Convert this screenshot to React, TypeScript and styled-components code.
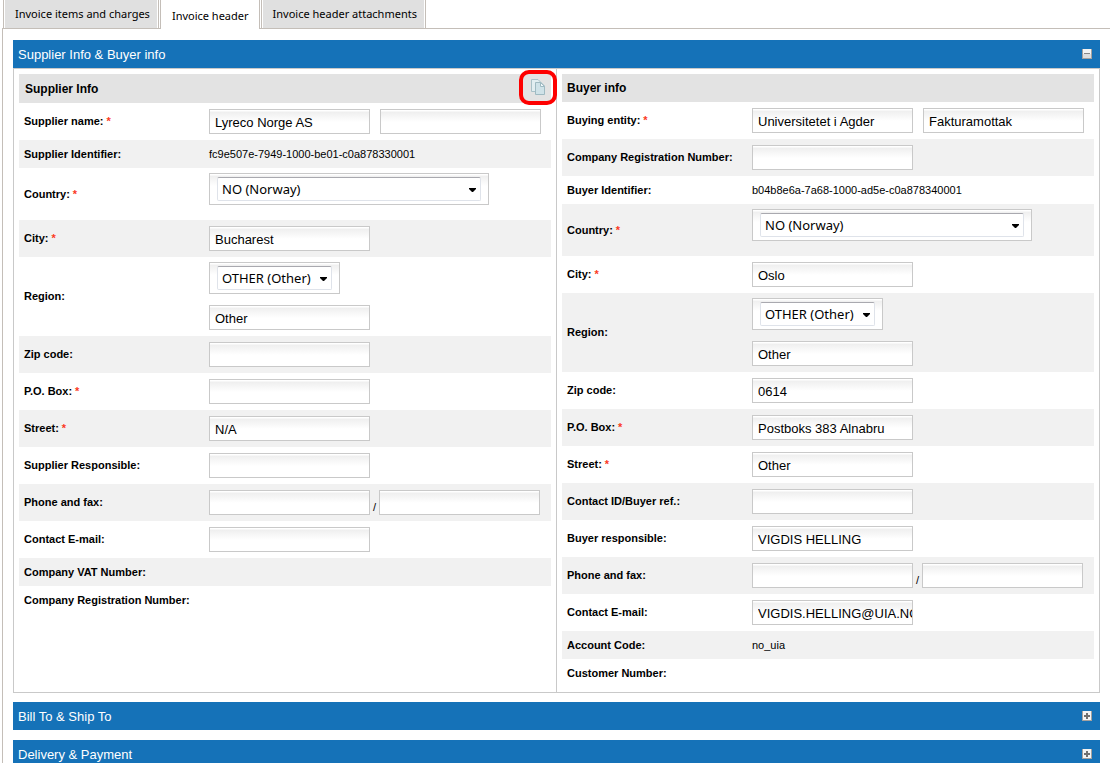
import React, { useId } from "react";
import styled, { createGlobalStyle } from "styled-components";

const GlobalStyle = createGlobalStyle`
  * { box-sizing: border-box; }
  body {
    margin: 0;
    background: #fff;
    color: #000;
    font-family: "Liberation Sans", Arial, sans-serif;
    font-size: 11px;
    overflow-x: hidden;
    scrollbar-width: none;
  }
`;

const line = "#c4beb8";

const Page = styled.div`
  padding-left: 2px;
`;

const TabBar = styled.nav`
  display: flex;
  gap: 1px;
  height: 29px;
  padding-left: 1px;
  box-shadow: inset 0 -1px ${line};
`;

const Tab = styled.button<{ $active?: boolean }>`
  height: ${(p) => (p.$active ? 29 : 28)}px;
  margin: 0;
  padding: ${(p) => (p.$active ? "2px 10px 0 11px" : "0 8px 0 11px")};
  border: solid ${line};
  border-width: 0 1px;
  background: ${(p) => (p.$active ? "#fff" : "#e0e0e0")};
  box-shadow: ${(p) => (p.$active ? "none" : "inset 1px 0 #fff, inset -1px 0 #fff")};
  font-family: "Noto Sans", sans-serif;
  font-size: 11px;
  line-height: 26px;
  color: #000;
  white-space: nowrap;
`;

const Content = styled.main`
  padding: 11px 10px 0;
  border-left: 1px solid ${line};
`;

const Section = styled.section`
  margin-bottom: 9px;
`;

const Collapsed = styled.section`
  margin-bottom: 10px;
`;

const Bar = styled.h2`
  display: flex;
  align-items: center;
  justify-content: space-between;
  height: 28px;
  margin: 0;
  padding: 0 8px 0 5px;
  background: #1572b8;
  color: #fff;
  font-size: 13px;
  font-weight: 400;
`;

const Toggle = styled.button`
  width: 10px;
  height: 10px;
  padding: 0;
  border: 0;
  background: none;
  svg { display: block; }
`;

const Panes = styled.div`
  display: flex;
  min-height: 625px;
  border: 1px solid #c9c9c9;
`;

const Pane = styled.section`
  flex: 1;
  min-width: 0;
  padding: 5px;
  & + & {
    border-left: 1px solid #c9c9c9;
  }
`;

const PaneHeader = styled.h3<{ $tall?: boolean }>`
  display: flex;
  align-items: center;
  justify-content: space-between;
  height: ${(p) => (p.$tall ? 29 : 28)}px;
  margin: 0;
  padding: 0 0 0 ${(p) => (p.$tall ? 6 : 5)}px;
  background: #e3e3e3;
  font-size: 12px;
  font-weight: 700;
`;

const CopyButton = styled.button`
  position: relative;
  width: 32px;
  height: 29px;
  padding: 0;
  border: 0;
  background: none;
`;

const CopyIcon = styled.svg`
  position: absolute;
  left: 12px;
  top: 5px;
`;

const Marker = styled.span`
  position: absolute;
  left: 0;
  top: -4px;
  width: 38px;
  height: 35px;
  border: 4px solid #fe0000;
  border-radius: 10px;
`;

const Row = styled.div<{ $shade: boolean }>`
  display: grid;
  grid-template-columns: 190px 1fr;
  align-items: center;
  min-height: 28px;
  background: ${(p) => (p.$shade ? "#f1f1f1" : "#fff")};
`;

const Label = styled.label`
  padding: 0 0 1px 5px;
  font-weight: 700;
`;

const Star = styled.span`
  color: #fb3a1e;
  margin-left: 3px;
`;

const Fields = styled.div<{ $gap?: number }>`
  display: flex;
  gap: ${(p) => p.$gap ?? 0}px;
  padding: 6px 0;
`;

const Slash = styled.span`
  width: 9px;
  padding: 11px 0 0 3px;
`;

const TextInput = styled.input`
  width: 161px;
  height: 25px;
  padding: 2px 0 0 5px;
  border: 1px solid #c9c9c9;
  border-radius: 0;
  background: linear-gradient(#fff 1px, #efefef 2px, #fff 12px);
  font-family: "Liberation Sans", Arial, sans-serif;
  font-size: 13px;
  color: #000;
`;

const SelectStack = styled.div<{ $country?: boolean }>`
  display: flex;
  flex-direction: column;
  align-items: flex-start;
  gap: 11px;
  padding: 5px 0 ${(p) => (p.$country ? 15 : 6)}px;
`;

const SelectFrame = styled.div<{ $wide?: boolean }>`
  position: relative;
  width: ${(p) => (p.$wide ? 280 : 131)}px;
  height: 32px;
  padding: 3px 7px;
  border: 1px solid #c9c9c9;
  background: linear-gradient(#fff 1px, #efefef 2px, #fff 12px);
`;

const Select = styled.select`
  appearance: none;
  display: block;
  width: 100%;
  height: 24px;
  padding: 0 0 0 4px;
  border: 1px solid #dfe3ea;
  border-top-color: #a9a9af;
  border-radius: 2px;
  background: #fff;
  font-family: "Noto Sans", sans-serif;
  font-size: 13px;
  color: #000;
`;

const Arrow = styled.svg`
  position: absolute;
  right: 12px;
  top: 14px;
  pointer-events: none;
`;

function ToggleButton({ open }: { open?: boolean }) {
  return (
    <Toggle type="button" aria-label={open ? "Collapse" : "Expand"}>
      <svg width="10" height="10" viewBox="0 0 10 10" shapeRendering="crispEdges">
        <rect width="10" height="10" rx="1" fill="#a5a19e" />
        <rect x="1" y="0" width="8" height="9" fill="#f4f4f4" />
        {open ? (
          <>
            <rect x="1" y="5" width="8" height="4" fill="#dedede" />
            <rect x="2" y="4" width="6" height="1" fill="#888" />
          </>
        ) : (
          <path d="M2 4h2V2h2v2h2v2H6v2H4V6H2z" fill="#707070" />
        )}
      </svg>
    </Toggle>
  );
}

type Field = {
  label: string;
  required?: boolean;
  kind?: "input" | "pair" | "phone" | "text" | "country" | "region";
  values?: string[];
};

function SelectBox({ id, value, wide }: { id: string; value: string; wide?: boolean }) {
  return (
    <SelectFrame $wide={wide}>
      <Select id={id} defaultValue={value}>
        <option>{value}</option>
      </Select>
      <Arrow width="7" height="4" viewBox="0 0 7 4">
        <path d="M0 0h7v1L4 4H3L0 1z" />
      </Arrow>
    </SelectFrame>
  );
}

function FieldRow({ field, shade }: { field: Field; shade: boolean }) {
  const id = useId();
  const { label, required, kind = "input", values = [] } = field;
  return (
    <Row $shade={shade}>
      <Label as={kind === "text" ? "span" : "label"} htmlFor={kind === "text" ? undefined : id}>
        {label}
        {required && <Star>*</Star>}
      </Label>
      {kind === "text" && <span>{values[0]}</span>}
      {kind === "input" && (
        <Fields>
          <TextInput id={id} defaultValue={values[0]} />
        </Fields>
      )}
      {kind === "pair" && (
        <Fields $gap={10}>
          <TextInput id={id} defaultValue={values[0]} />
          <TextInput aria-label={label + " 2"} defaultValue={values[1]} />
        </Fields>
      )}
      {kind === "phone" && (
        <Fields>
          <TextInput id={id} />
          <Slash>/</Slash>
          <TextInput aria-label="Fax" />
        </Fields>
      )}
      {kind === "country" && (
        <SelectStack $country>
          <SelectBox id={id} value={values[0]} wide />
        </SelectStack>
      )}
      {kind === "region" && (
        <SelectStack>
          <SelectBox id={id} value={values[0]} />
          <TextInput aria-label="Region name" defaultValue={values[1]} />
        </SelectStack>
      )}
    </Row>
  );
}

const supplier: Field[] = [
  { label: "Supplier name:", required: true, kind: "pair", values: ["Lyreco Norge AS", ""] },
  { label: "Supplier Identifier:", kind: "text", values: ["fc9e507e-7949-1000-be01-c0a878330001"] },
  { label: "Country:", required: true, kind: "country", values: ["NO (Norway)"] },
  { label: "City:", required: true, values: ["Bucharest"] },
  { label: "Region:", kind: "region", values: ["OTHER (Other)", "Other"] },
  { label: "Zip code:" },
  { label: "P.O. Box:", required: true },
  { label: "Street:", required: true, values: ["N/A"] },
  { label: "Supplier Responsible:" },
  { label: "Phone and fax:", kind: "phone" },
  { label: "Contact E-mail:" },
  { label: "Company VAT Number:", kind: "text" },
  { label: "Company Registration Number:", kind: "text" },
];

const buyer: Field[] = [
  { label: "Buying entity:", required: true, kind: "pair", values: ["Universitetet i Agder", "Fakturamottak"] },
  { label: "Company Registration Number:" },
  { label: "Buyer Identifier:", kind: "text", values: ["b04b8e6a-7a68-1000-ad5e-c0a878340001"] },
  { label: "Country:", required: true, kind: "country", values: ["NO (Norway)"] },
  { label: "City:", required: true, values: ["Oslo"] },
  { label: "Region:", kind: "region", values: ["OTHER (Other)", "Other"] },
  { label: "Zip code:", values: ["0614"] },
  { label: "P.O. Box:", required: true, values: ["Postboks 383 Alnabru"] },
  { label: "Street:", required: true, values: ["Other"] },
  { label: "Contact ID/Buyer ref.:" },
  { label: "Buyer responsible:", values: ["VIGDIS HELLING"] },
  { label: "Phone and fax:", kind: "phone" },
  { label: "Contact E-mail:", values: ["VIGDIS.HELLING@UIA.NO"] },
  { label: "Account Code:", kind: "text", values: ["no_uia"] },
  { label: "Customer Number:", kind: "text" },
];

export default function App() {
  return (
    <Page>
      <GlobalStyle />
      <TabBar>
        <Tab type="button">Invoice items and charges</Tab>
        <Tab type="button" $active>Invoice header</Tab>
        <Tab type="button">Invoice header attachments</Tab>
      </TabBar>
      <Content>
        <Section>
          <Bar>
            Supplier Info &amp; Buyer info
            <ToggleButton open />
          </Bar>
          <Panes>
            <Pane>
              <PaneHeader $tall>
                Supplier Info
                <CopyButton type="button" aria-label="Copy supplier info">
                  <CopyIcon width="14" height="16" viewBox="0 0 14 16">
                    <path d="M.5.5H7L10 3.500v9H.5z" fill="#e2eef1" stroke="#a9c1c8" />
                    <path d="M4.500 3.500H10L13.500 7v8.500h-9z" fill="#cfe2e8" stroke="#9fbac2" />
                    <path d="M9.500 3.500v4h4z" fill="#f2f8fa" stroke="#9fbac2" />
                  </CopyIcon>
                  <Marker />
                </CopyButton>
              </PaneHeader>
              {supplier.map((f, i) => (
                <FieldRow key={f.label} field={f} shade={i % 2 === 1} />
              ))}
            </Pane>
            <Pane>
              <PaneHeader>Buyer info</PaneHeader>
              {buyer.map((f, i) => (
                <FieldRow key={f.label} field={f} shade={i % 2 === 1} />
              ))}
            </Pane>
          </Panes>
        </Section>
        <Collapsed>
          <Bar>
            Bill To &amp; Ship To
            <ToggleButton />
          </Bar>
        </Collapsed>
        <Collapsed>
          <Bar>
            Delivery &amp; Payment
            <ToggleButton />
          </Bar>
        </Collapsed>
      </Content>
    </Page>
  );
}
